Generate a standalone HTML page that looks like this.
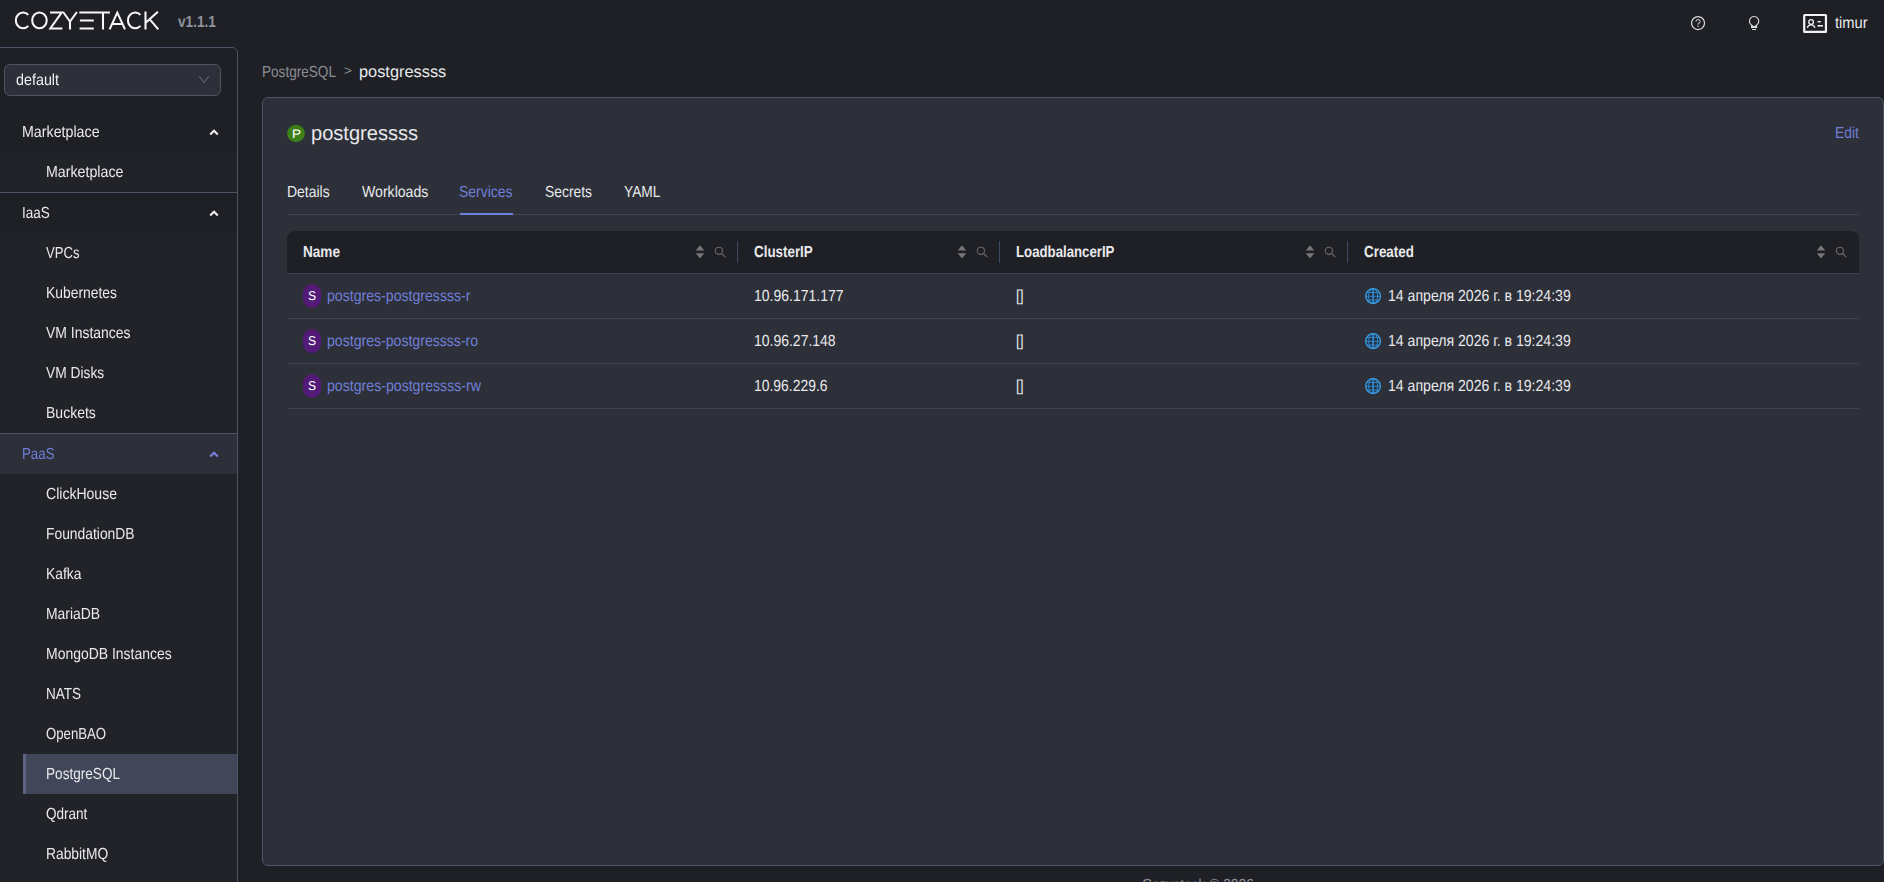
<!DOCTYPE html>
<html lang="en"><head><meta charset="utf-8"><title>Cozystack</title>
<style>
html,body{margin:0;padding:0;}
html{width:1884px;height:882px;overflow:hidden;background:#1f2026;}
body{width:1884px;height:882px;overflow:hidden;background:#1f2026;position:relative;font-family:"Liberation Sans",sans-serif;}
.a{position:absolute;display:block;}
.g{position:absolute;left:0;top:0;width:1884px;height:882px;overflow:hidden;will-change:transform;}
.t{position:absolute;display:block;white-space:nowrap;text-rendering:geometricPrecision;line-height:24px;height:24px;transform-origin:0 50%;}
.root{position:absolute;left:0;top:0;width:1884px;height:882px;overflow:hidden;background:#1f2026;}
</style></head><body>
<div class="root">

<svg class="a" style="left:0;top:0" width="170" height="44" viewBox="0 0 170 44" fill="none" stroke="#f7f7f7" stroke-width="2.05">
<path d="M28.3 14.9 A7.25 7.9 0 1 0 28.3 25.9"/>
<ellipse cx="39.45" cy="20.4" rx="7.25" ry="7.9"/>
<path d="M50.0 12.5 H61.7 L50.3 28.4 H62.4"/>
<path d="M63.1 12 L70 21.6 L76.9 12 M70 21.6 V29.4"/>
<path d="M79.3 12.5 H109.9 M79.9 20.5 H93.8 M79.6 28.5 H93.8 M103 12.5 V29.4"/>
<path d="M109.6 29.4 L117.3 12.6 L125 29.4 M112.3 23.9 H122.3"/>
<path d="M140.4 14.9 A7.25 7.9 0 1 0 140.4 25.9"/>
<path d="M145.5 11.6 V29.4 M157.9 11.8 L146 22.6 M149.6 19.2 L158.3 29.4"/>
</svg>

<svg class="a" style="left:1690px;top:15px" width="16" height="16" viewBox="0 0 16 16" fill="none" stroke="#dcdde0">
<circle cx="8.05" cy="8.05" r="6.5" stroke-width="1.2"/>
<path d="M6 6.5 A2.05 2.05 0 1 1 8.05 8.6 V9.7" stroke-width="0.95"/><rect x="7.3" y="10.7" width="1.5" height="1" fill="#dcdde0" stroke="none"/></svg>
<svg class="a" style="left:1746px;top:14px" width="16" height="18" viewBox="0 0 16 18" fill="none" stroke="#dcdde0">
<path d="M5.7 12.9 V11.1 A4.65 4.65 0 1 1 10.5 11.1 V12.9" stroke-width="1.1"/>
<path d="M5.15 13 V11.5 L6.4 11 L8.1 12.4 L9.8 11 L11.05 11.5 V13 Z" fill="#dcdde0" stroke="none"/><path d="M5 13.4 H11.2" stroke-width="1.3"/><path d="M6 15.55 H10.2" stroke-width="0.95"/></svg>
<svg class="a" style="left:1802px;top:13px" width="27" height="22" viewBox="0 0 27 22" fill="none" stroke="#f2f2f3">
<rect x="2.2" y="2.0" width="21.75" height="16.95" rx="0.4" stroke-width="2.2"/>
<circle cx="9.1" cy="9.0" r="2.3" stroke-width="1.3"/>
<path d="M5.4 14.9 C5.7 12.7 7.3 11.9 9.1 11.9 C10.9 11.9 12.5 12.7 12.8 14.9" stroke-width="1.3"/>
<path d="M15.5 8.7 H18.9" stroke-width="1.4"/><path d="M15.5 12.8 H21" stroke-width="1.6"/></svg>

<div class="a" style="left:-1px;top:47px;width:237px;height:900px;border:1px solid #4b5566;border-radius:0 6px 0 0;box-sizing:content-box"></div>
<div class="a" style="left:0;top:152px;width:237px;height:40px;background:#222329"></div>
<div class="a" style="left:0;top:192px;width:237px;height:1px;background:#4b5566"></div>
<div class="a" style="left:0;top:233px;width:237px;height:200px;background:#222329"></div>
<div class="a" style="left:0;top:433px;width:237px;height:1px;background:#4b5566"></div>
<div class="a" style="left:0;top:434px;width:237px;height:40px;background:#2d2f39"></div>
<div class="a" style="left:0;top:474px;width:237px;height:420px;background:#222329"></div>
<div class="a" style="left:23px;top:754px;width:214px;height:40px;background:#414659"></div>
<div class="a" style="left:23px;top:754px;width:3px;height:40px;background:#5b6583"></div>
<div class="a" style="left:4px;top:64px;width:215px;height:30px;border:1px solid #4b5566;border-radius:6px;background:#2d2f39"></div>
<svg class="a" style="left:197px;top:73px" width="14" height="14" viewBox="0 0 14 14"><path d="M2.1 3.2 L7 9.6 L11.9 3.2" fill="none" stroke="#5d6069" stroke-width="1.1"/></svg>

<svg class="a" style="left:207px;top:125.4px" width="14" height="14" viewBox="0 0 14 14"><path d="M3.2 9.5 L7 5.7 L10.8 9.5" fill="none" stroke="#f0f0f0" stroke-width="2.05" stroke-linejoin="miter"/></svg>
<svg class="a" style="left:207px;top:206.4px" width="14" height="14" viewBox="0 0 14 14"><path d="M3.2 9.5 L7 5.7 L10.8 9.5" fill="none" stroke="#f0f0f0" stroke-width="2.05" stroke-linejoin="miter"/></svg>
<svg class="a" style="left:207px;top:447.4px" width="14" height="14" viewBox="0 0 14 14"><path d="M3.2 9.5 L7 5.7 L10.8 9.5" fill="none" stroke="#7983dc" stroke-width="2.05" stroke-linejoin="miter"/></svg>
<div class="a" style="left:262px;top:97px;width:1620px;height:767px;border:1px solid #4b5566;border-radius:6px;background:#2d2f39"></div>
<div class="a" style="left:287px;top:124.6px;width:18px;height:17.6px;border-radius:50%;background:#3d8019"></div>
<div class="a" style="left:287px;top:214px;width:1572px;height:1px;background:#3a4354"></div>
<div class="a" style="left:460px;top:213px;width:53px;height:2px;background:#6f7fd6"></div>
<div class="a" style="left:287px;top:231px;width:1572px;height:42px;background:#1f2026;border-radius:8px 8px 0 0"></div>
<div class="a" style="left:287px;top:273px;width:1572px;height:1px;background:#3a4253"></div>
<div class="a" style="left:287px;top:318px;width:1572px;height:1px;background:#3a4253"></div>
<div class="a" style="left:287px;top:363px;width:1572px;height:1px;background:#3a4253"></div>
<div class="a" style="left:287px;top:408px;width:1572px;height:1px;background:#3a4253"></div>

<div class="a" style="left:737px;top:241px;width:1px;height:22px;background:#3d4961"></div>
<div class="a" style="left:999px;top:241px;width:1px;height:22px;background:#3d4961"></div>
<div class="a" style="left:1347px;top:241px;width:1px;height:22px;background:#3d4961"></div>
<svg class="a" style="left:694px;top:244px" width="12" height="16" viewBox="0 0 12 16"><path d="M6 1.2 L10.2 6.6 H1.8 Z" fill="#76777b"/><path d="M6 14.6 L10.2 9.2 H1.8 Z" fill="#76777b"/></svg>
<svg class="a" style="left:713.1px;top:245px" width="14" height="14" viewBox="0 0 14 14"><circle cx="5.9" cy="5.8" r="3.6" fill="none" stroke="#696a6e" stroke-width="1.1"/><path d="M8.6 8.5 L12.3 12.2" stroke="#696a6e" stroke-width="1.2" fill="none"/></svg>
<svg class="a" style="left:956px;top:244px" width="12" height="16" viewBox="0 0 12 16"><path d="M6 1.2 L10.2 6.6 H1.8 Z" fill="#76777b"/><path d="M6 14.6 L10.2 9.2 H1.8 Z" fill="#76777b"/></svg>
<svg class="a" style="left:975.1px;top:245px" width="14" height="14" viewBox="0 0 14 14"><circle cx="5.9" cy="5.8" r="3.6" fill="none" stroke="#696a6e" stroke-width="1.1"/><path d="M8.6 8.5 L12.3 12.2" stroke="#696a6e" stroke-width="1.2" fill="none"/></svg>
<svg class="a" style="left:1304px;top:244px" width="12" height="16" viewBox="0 0 12 16"><path d="M6 1.2 L10.2 6.6 H1.8 Z" fill="#76777b"/><path d="M6 14.6 L10.2 9.2 H1.8 Z" fill="#76777b"/></svg>
<svg class="a" style="left:1323.1px;top:245px" width="14" height="14" viewBox="0 0 14 14"><circle cx="5.9" cy="5.8" r="3.6" fill="none" stroke="#696a6e" stroke-width="1.1"/><path d="M8.6 8.5 L12.3 12.2" stroke="#696a6e" stroke-width="1.2" fill="none"/></svg>
<svg class="a" style="left:1815px;top:244px" width="12" height="16" viewBox="0 0 12 16"><path d="M6 1.2 L10.2 6.6 H1.8 Z" fill="#76777b"/><path d="M6 14.6 L10.2 9.2 H1.8 Z" fill="#76777b"/></svg>
<svg class="a" style="left:1834.1px;top:245px" width="14" height="14" viewBox="0 0 14 14"><circle cx="5.9" cy="5.8" r="3.6" fill="none" stroke="#696a6e" stroke-width="1.1"/><path d="M8.6 8.5 L12.3 12.2" stroke="#696a6e" stroke-width="1.2" fill="none"/></svg>
<div class="a" style="left:303px;top:284px;width:18px;height:24px;border-radius:9px;background:#531b77"></div>
<svg class="a" style="left:1364px;top:287px" width="18" height="18" viewBox="0 0 18 18" fill="none"><circle cx="9.1" cy="9.1" r="7.4" fill="#26313f"/><path d="M9.1 1.7 V16.5" stroke="#2e86cc" stroke-width="1.7"/><ellipse cx="9.1" cy="9.1" rx="4.55" ry="7.4" stroke="#2f8ad2" stroke-width="0.95"/><path d="M1.7 9.3 H16.5 M2.7 5.4 H15.5 M2.7 13.1 H15.5" stroke="#2f8ad2" stroke-width="0.95"/><circle cx="9.1" cy="9.1" r="7.4" stroke="#3a9fe8" stroke-width="1.3"/></svg>
<div class="a" style="left:303px;top:329px;width:18px;height:24px;border-radius:9px;background:#531b77"></div>
<svg class="a" style="left:1364px;top:332px" width="18" height="18" viewBox="0 0 18 18" fill="none"><circle cx="9.1" cy="9.1" r="7.4" fill="#26313f"/><path d="M9.1 1.7 V16.5" stroke="#2e86cc" stroke-width="1.7"/><ellipse cx="9.1" cy="9.1" rx="4.55" ry="7.4" stroke="#2f8ad2" stroke-width="0.95"/><path d="M1.7 9.3 H16.5 M2.7 5.4 H15.5 M2.7 13.1 H15.5" stroke="#2f8ad2" stroke-width="0.95"/><circle cx="9.1" cy="9.1" r="7.4" stroke="#3a9fe8" stroke-width="1.3"/></svg>
<div class="a" style="left:303px;top:374px;width:18px;height:24px;border-radius:9px;background:#531b77"></div>
<svg class="a" style="left:1364px;top:377px" width="18" height="18" viewBox="0 0 18 18" fill="none"><circle cx="9.1" cy="9.1" r="7.4" fill="#26313f"/><path d="M9.1 1.7 V16.5" stroke="#2e86cc" stroke-width="1.7"/><ellipse cx="9.1" cy="9.1" rx="4.55" ry="7.4" stroke="#2f8ad2" stroke-width="0.95"/><path d="M1.7 9.3 H16.5 M2.7 5.4 H15.5 M2.7 13.1 H15.5" stroke="#2f8ad2" stroke-width="0.95"/><circle cx="9.1" cy="9.1" r="7.4" stroke="#3a9fe8" stroke-width="1.3"/></svg>
<span class="t" style="left:177.72px;top:11px;font-size:16.0px;font-weight:700;color:#8f939d;transform:scaleX(0.8524);">v1.1.1</span>
<span class="t" style="left:1835.22px;top:12px;font-size:16.0px;font-weight:400;color:#e8e9eb;transform:scaleX(0.9200);">timur</span>
<span class="t" style="left:261.84px;top:61px;font-size:16.0px;font-weight:400;color:#8b8d93;transform:scaleX(0.8483);">PostgreSQL</span>
<span class="t" style="left:343.86px;top:59px;font-size:13.4px;font-weight:400;color:#8b8d93;transform:scaleX(1.0206);">></span>
<span class="t" style="left:359.42px;top:60px;font-size:16.2px;font-weight:400;color:#e8e9eb;transform:scaleX(1.0101);">postgressss</span>
<span class="t" style="left:311.34px;top:122px;font-size:20.6px;font-weight:400;color:#e8e9eb;transform:scaleX(0.9746);">postgressss</span>
<span class="t" style="left:291.68px;top:122px;font-size:12.4px;font-weight:400;color:#ffffff;transform:scaleX(1.0932);">P</span>
<span class="t" style="left:1834.82px;top:122px;font-size:16.0px;font-weight:400;color:#6f7fd6;transform:scaleX(0.8634);">Edit</span>
<span class="t" style="left:286.81px;top:181px;font-size:16.0px;font-weight:400;color:#e8e9eb;transform:scaleX(0.8723);">Details</span>
<span class="t" style="left:361.75px;top:181px;font-size:16.0px;font-weight:400;color:#e8e9eb;transform:scaleX(0.8813);">Workloads</span>
<span class="t" style="left:459.31px;top:181px;font-size:16.0px;font-weight:400;color:#6f7fd6;transform:scaleX(0.8710);">Services</span>
<span class="t" style="left:544.52px;top:181px;font-size:16.0px;font-weight:400;color:#e8e9eb;transform:scaleX(0.8672);">Secrets</span>
<span class="t" style="left:623.60px;top:181px;font-size:16.0px;font-weight:400;color:#e8e9eb;transform:scaleX(0.8587);">YAML</span>
<span class="t" style="left:302.86px;top:241px;font-size:16.0px;font-weight:700;color:#e8e9eb;transform:scaleX(0.8484);">Name</span>
<span class="t" style="left:753.61px;top:241px;font-size:16.0px;font-weight:700;color:#e8e9eb;transform:scaleX(0.8367);">ClusterIP</span>
<span class="t" style="left:1016.18px;top:241px;font-size:16.0px;font-weight:700;color:#e8e9eb;transform:scaleX(0.8259);">LoadbalancerIP</span>
<span class="t" style="left:1364.11px;top:241px;font-size:16.0px;font-weight:700;color:#e8e9eb;transform:scaleX(0.8367);">Created</span>
<span class="t" style="left:307.85px;top:284px;font-size:12.9px;font-weight:400;color:#ffffff;transform:scaleX(0.9423);">S</span>
<span class="t" style="left:327.03px;top:285px;font-size:16.0px;font-weight:400;color:#6f7fd6;transform:scaleX(0.8816);">postgres-postgressss-r</span>
<span class="t" style="left:754.20px;top:285px;font-size:16.0px;font-weight:400;color:#e8e9eb;transform:scaleX(0.8753);">10.96.171.177</span>
<span class="t" style="left:1016.26px;top:285px;font-size:16.0px;font-weight:400;color:#e8e9eb;transform:scaleX(0.8540);">[]</span>
<span class="t" style="left:1387.90px;top:285px;font-size:16.0px;font-weight:400;color:#e8e9eb;transform:scaleX(0.8805);">14 апреля 2026 г. в 19:24:39</span>
<span class="t" style="left:307.85px;top:329px;font-size:12.9px;font-weight:400;color:#ffffff;transform:scaleX(0.9423);">S</span>
<span class="t" style="left:327.03px;top:330px;font-size:16.0px;font-weight:400;color:#6f7fd6;transform:scaleX(0.8805);">postgres-postgressss-ro</span>
<span class="t" style="left:754.20px;top:330px;font-size:16.0px;font-weight:400;color:#e8e9eb;transform:scaleX(0.8736);">10.96.27.148</span>
<span class="t" style="left:1016.26px;top:330px;font-size:16.0px;font-weight:400;color:#e8e9eb;transform:scaleX(0.8540);">[]</span>
<span class="t" style="left:1387.90px;top:330px;font-size:16.0px;font-weight:400;color:#e8e9eb;transform:scaleX(0.8805);">14 апреля 2026 г. в 19:24:39</span>
<span class="t" style="left:307.85px;top:374px;font-size:12.9px;font-weight:400;color:#ffffff;transform:scaleX(0.9423);">S</span>
<span class="t" style="left:327.03px;top:375px;font-size:16.0px;font-weight:400;color:#6f7fd6;transform:scaleX(0.8833);">postgres-postgressss-rw</span>
<span class="t" style="left:754.21px;top:375px;font-size:16.0px;font-weight:400;color:#e8e9eb;transform:scaleX(0.8693);">10.96.229.6</span>
<span class="t" style="left:1016.26px;top:375px;font-size:16.0px;font-weight:400;color:#e8e9eb;transform:scaleX(0.8540);">[]</span>
<span class="t" style="left:1387.90px;top:375px;font-size:16.0px;font-weight:400;color:#e8e9eb;transform:scaleX(0.8805);">14 апреля 2026 г. в 19:24:39</span>
<span class="t" style="left:1141.59px;top:874px;font-size:16.0px;font-weight:400;color:#8b8d93;transform:scaleX(0.8594);">Cozystack © 2026</span>
<div class="g">
<span class="t" style="left:16.05px;top:69px;font-size:16.0px;font-weight:400;color:#f1f1f2;transform:scaleX(0.8957);">default</span>
<span class="t" style="left:21.94px;top:121px;font-size:16.0px;font-weight:400;color:#e8e9eb;transform:scaleX(0.8898);">Marketplace</span>
<span class="t" style="left:45.85px;top:161px;font-size:16.0px;font-weight:400;color:#e8e9eb;transform:scaleX(0.8886);">Marketplace</span>
<span class="t" style="left:21.85px;top:202px;font-size:16.0px;font-weight:400;color:#e8e9eb;transform:scaleX(0.8437);">IaaS</span>
<span class="t" style="left:46.27px;top:242px;font-size:16.0px;font-weight:400;color:#e8e9eb;transform:scaleX(0.8182);">VPCs</span>
<span class="t" style="left:45.87px;top:282px;font-size:16.0px;font-weight:400;color:#e8e9eb;transform:scaleX(0.8673);">Kubernetes</span>
<span class="t" style="left:46.26px;top:322px;font-size:16.0px;font-weight:400;color:#e8e9eb;transform:scaleX(0.8720);">VM Instances</span>
<span class="t" style="left:46.26px;top:362px;font-size:16.0px;font-weight:400;color:#e8e9eb;transform:scaleX(0.8618);">VM Disks</span>
<span class="t" style="left:45.86px;top:402px;font-size:16.0px;font-weight:400;color:#e8e9eb;transform:scaleX(0.8751);">Buckets</span>
<span class="t" style="left:22.01px;top:443px;font-size:16.0px;font-weight:400;color:#6f7fd6;transform:scaleX(0.8313);">PaaS</span>
<span class="t" style="left:45.93px;top:483px;font-size:16.0px;font-weight:400;color:#e8e9eb;transform:scaleX(0.8775);">ClickHouse</span>
<span class="t" style="left:45.87px;top:523px;font-size:16.0px;font-weight:400;color:#e8e9eb;transform:scaleX(0.8656);">FoundationDB</span>
<span class="t" style="left:45.88px;top:563px;font-size:16.0px;font-weight:400;color:#e8e9eb;transform:scaleX(0.8633);">Kafka</span>
<span class="t" style="left:45.87px;top:603px;font-size:16.0px;font-weight:400;color:#e8e9eb;transform:scaleX(0.8694);">MariaDB</span>
<span class="t" style="left:45.86px;top:643px;font-size:16.0px;font-weight:400;color:#e8e9eb;transform:scaleX(0.8728);">MongoDB Instances</span>
<span class="t" style="left:45.90px;top:683px;font-size:16.0px;font-weight:400;color:#e8e9eb;transform:scaleX(0.8445);">NATS</span>
<span class="t" style="left:46.02px;top:723px;font-size:16.0px;font-weight:400;color:#e8e9eb;transform:scaleX(0.8235);">OpenBAO</span>
<span class="t" style="left:45.89px;top:763px;font-size:16.0px;font-weight:400;color:#e8e9eb;transform:scaleX(0.8497);">PostgreSQL</span>
<span class="t" style="left:46.00px;top:803px;font-size:16.0px;font-weight:400;color:#e8e9eb;transform:scaleX(0.8458);">Qdrant</span>
<span class="t" style="left:45.88px;top:843px;font-size:16.0px;font-weight:400;color:#e8e9eb;transform:scaleX(0.8624);">RabbitMQ</span>
</div>

</div>
</body></html>
